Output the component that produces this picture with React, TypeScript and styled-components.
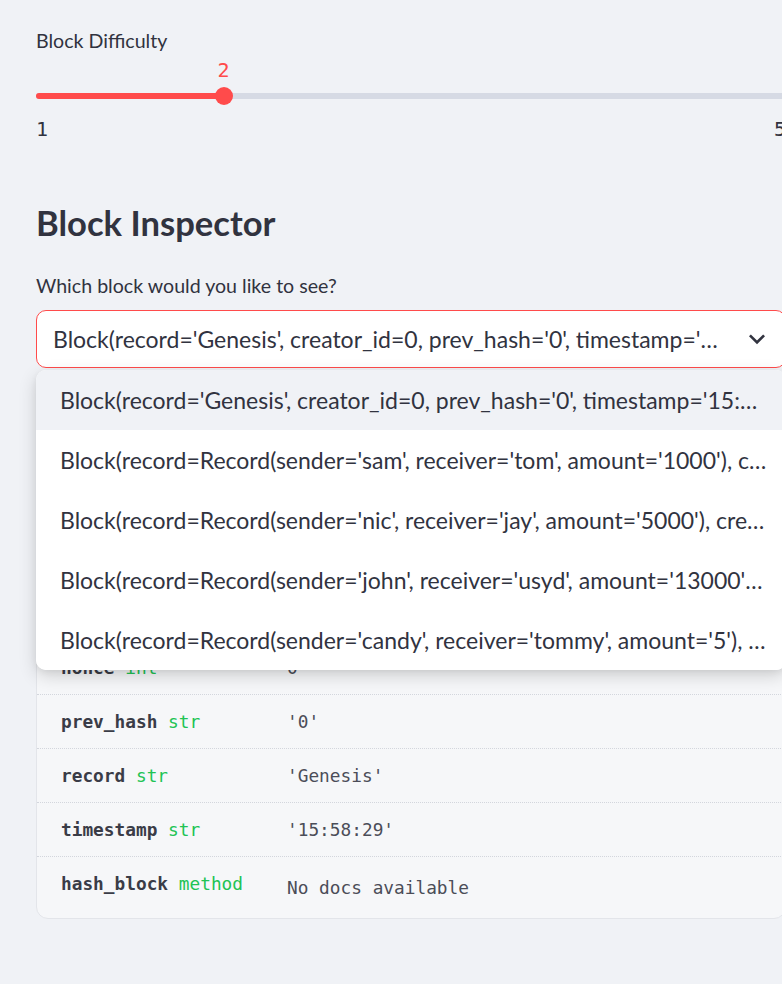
import React from "react";
import styled, { createGlobalStyle } from "styled-components";

const SANS = `Lato, "Noto Sans", sans-serif`;
const MONO = `"DejaVu Sans Mono", "Liberation Mono", monospace`;

const GlobalStyle = createGlobalStyle`
  html, body {
    margin: 0;
    padding: 0;
    width: 782px;
    height: 984px;
    overflow: hidden;
    background: #f0f2f6;
  }
  body {
    font-family: ${SANS};
    color: #31333f;
  }
  * { box-sizing: border-box; }
`;

const Page = styled.main`
  width: 750px;
  margin-left: 36px;
  padding-top: 26px;
  display: flex;
  flex-direction: column;
`;

const FieldLabel = styled.div<{ $gap?: number }>`
  font: 400 19.6px/30px ${SANS};
  color: #31333f;
  margin-top: ${(p) => p.$gap ?? 0}px;
`;

const SliderBody = styled.div`
  display: flex;
  flex-direction: column;
`;

const ValueRow = styled.div`
  position: relative;
  height: 28px;
`;

const ThumbValue = styled.span`
  position: absolute;
  top: 0;
  transform: translateX(-50%);
  font: 400 20px/28px ${MONO};
  color: #ff4b4b;
`;

const TrackArea = styled.div`
  position: relative;
  height: 24px;
  display: flex;
  align-items: center;
`;

const Track = styled.div`
  width: 100%;
  height: 6px;
  border-radius: 3px;
  background: #d6dae4;
`;

const Fill = styled.div`
  position: absolute;
  left: 0;
  top: 9px;
  height: 6px;
  border-radius: 3px;
  background: #ff4b4b;
`;

const Thumb = styled.div`
  position: absolute;
  top: 3px;
  width: 18px;
  height: 18px;
  border-radius: 50%;
  background: #ff4b4b;
  transform: translateX(-50%);
`;

const Ticks = styled.div`
  margin-top: 8px;
  display: flex;
  justify-content: space-between;
  font: 400 20px/26px ${MONO};
  color: #31333f;
`;

const Heading = styled.h3`
  margin: 58px 0 0;
  font: 700 34.6px/46px ${SANS};
  color: #31333f;
`;

const SelectWrap = styled.div`
  position: relative;
  margin-top: 9px;
`;

const SelectBox = styled.div`
  height: 58px;
  border: 1px solid #ff4b4b;
  border-radius: 10px;
  background: #ffffff;
  display: flex;
  align-items: center;
  padding: 0 12px 0 16px;
  gap: 16px;
`;

const Ellipsis = styled.span`
  flex: 1;
  min-width: 0;
  display: block;
  white-space: nowrap;
  overflow: hidden;
  text-overflow: ellipsis;
  font: 400 23px/30px ${SANS};
  color: #31333f;
`;

const Chevron = styled.svg`
  flex: none;
  width: 32px;
  height: 32px;
  fill: #31333f;
`;

const Menu = styled.ul`
  position: absolute;
  z-index: 10;
  top: calc(100% + 2px);
  left: 0;
  right: 0;
  margin: 0;
  padding: 0;
  list-style: none;
  background: #ffffff;
  border-radius: 10px;
  overflow: hidden;
  box-shadow: 0 6px 18px rgba(0, 0, 0, 0.16), 0 2px 6px rgba(0, 0, 0, 0.06);
`;

const MenuItem = styled.li<{ $active?: boolean }>`
  height: 60px;
  display: flex;
  align-items: center;
  padding: 0 18px 0 24px;
  background: ${(p) => (p.$active ? "#f0f2f6" : "#ffffff")};
`;

const Help = styled.section`
  margin-top: 16px;
  border: 1px solid #e3e5ea;
  border-radius: 12px;
  background: #f6f7f9;
  overflow: hidden;
`;

const HelpHeader = styled.div`
  height: 147px;
  padding: 24px;
  display: flex;
  flex-direction: column;
  gap: 16px;
`;

const HelpTitle = styled.div`
  font: 700 24px/48px ${MONO};
  color: #31333f;
`;

const HelpDoc = styled.div`
  font: 400 17.8px/36px ${MONO};
  color: #4b4d58;
`;

const Row = styled.div<{ $tall?: boolean }>`
  display: grid;
  grid-template-columns: 226px 1fr;
  border-top: 1px dotted #d3d6dd;
  height: ${(p) => (p.$tall ? 62 : 54)}px;
  align-items: ${(p) => (p.$tall ? "start" : "center")};
  padding: ${(p) => (p.$tall ? "13px 0 0" : "0")};
`;

const NameCell = styled.div`
  padding: 0 24px;
  font: 700 17.8px/27px ${MONO};
  color: #3a3c47;
  white-space: nowrap;
`;

const TypeTag = styled.span`
  font-weight: 400;
  color: #21c354;
`;

const ValueCell = styled.div<{ $offset?: number }>`
  padding: 0 24px;
  margin-top: ${(p) => p.$offset ?? 0}px;
  font: 400 17.8px/27px ${MONO};
  color: #4b4d58;
  white-space: nowrap;
`;

const options = [
  "Block(record='Genesis', creator_id=0, prev_hash='0', timestamp='15:58:29', nonce=0)",
  "Block(record=Record(sender='sam', receiver='tom', amount='1000'), creator_id=1)",
  "Block(record=Record(sender='nic', receiver='jay', amount='5000'), creator_id=2)",
  "Block(record=Record(sender='john', receiver='usyd', amount='13000'), creator_id=3)",
  "Block(record=Record(sender='candy', receiver='tommy', amount='5'), creator_id=4)",
];

const rows: { name: string; type: string; value: string; tall?: boolean }[] = [
  { name: "creator_id", type: "int", value: "0" },
  { name: "hash", type: "str", value: "'00a3f1c9e2d4b7...'" },
  { name: "nonce", type: "int", value: "0" },
  { name: "prev_hash", type: "str", value: "'0'" },
  { name: "record", type: "str", value: "'Genesis'" },
  { name: "timestamp", type: "str", value: "'15:58:29'" },
  { name: "hash_block", type: "method", value: "No docs available", tall: true },
];

export default function App() {
  const min = 1;
  const max = 5;
  const value = 2;
  const pct = ((value - min) / (max - min)) * 100;

  return (
    <>
      <GlobalStyle />
      <Page>
        <FieldLabel>Block Difficulty</FieldLabel>
        <SliderBody>
          <ValueRow>
            <ThumbValue style={{ left: `${pct}%` }}>{value}</ThumbValue>
          </ValueRow>
          <TrackArea>
            <Track />
            <Fill style={{ width: `${pct}%` }} />
            <Thumb style={{ left: `${pct}%` }} />
          </TrackArea>
          <Ticks>
            <span>{min}</span>
            <span>{max}</span>
          </Ticks>
        </SliderBody>

        <Heading>Block Inspector</Heading>
        <FieldLabel $gap={25}>Which block would you like to see?</FieldLabel>

        <SelectWrap>
          <SelectBox>
            <Ellipsis>{options[0]}</Ellipsis>
            <Chevron viewBox="0 0 24 24">
              <path d="M16.59 8.59L12 13.17 7.41 8.59 6 10l6 6 6-6z" />
            </Chevron>
          </SelectBox>
          <Menu>
            {options.map((o, i) => (
              <MenuItem key={i} $active={i === 0}>
                <Ellipsis>{o}</Ellipsis>
              </MenuItem>
            ))}
          </Menu>
        </SelectWrap>

        <Help>
          <HelpHeader>
            <HelpTitle>Block</HelpTitle>
            <HelpDoc>class Block(record, creator_id, prev_hash, ...)</HelpDoc>
          </HelpHeader>
          {rows.map((r) => (
            <Row key={r.name} $tall={r.tall}>
              <NameCell>
                {r.name} <TypeTag>{r.type}</TypeTag>
              </NameCell>
              <ValueCell $offset={r.tall ? 4 : 0}>{r.value}</ValueCell>
            </Row>
          ))}
        </Help>
      </Page>
    </>
  );
}
